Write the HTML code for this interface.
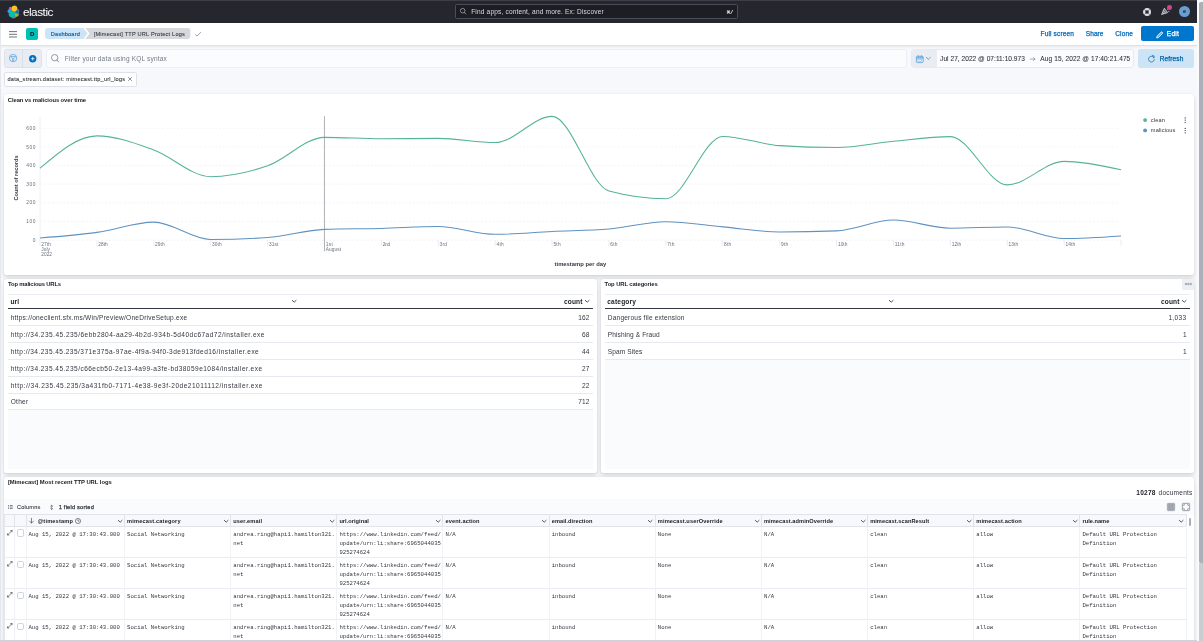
<!DOCTYPE html>
<html lang="en"><head><meta charset="utf-8"><title>[Mimecast] TTP URL Protect Logs - Elastic</title>
<style>
html,body{margin:0;padding:0;}
body{width:1203px;height:641px;overflow:hidden;position:relative;background:#f7f8fc;font-family:"Liberation Sans",sans-serif;color:#343741;}
.t{position:absolute;white-space:pre;line-height:10px;font-size:6.56px;color:#343741;}
.m{font-family:"Liberation Mono","DejaVu Sans Mono",monospace;}
#txt{position:absolute;left:0;top:0;width:1203px;height:641px;will-change:transform;}
.a{position:absolute;}
.panel{position:absolute;background:#fff;border-radius:2.8px;box-shadow:0 .4px 1.9px -.5px rgba(0,0,0,.07),0 1.2px 3.8px -.5px rgba(0,0,0,.055),0 2.7px 5.6px -.5px rgba(0,0,0,.05),0 7px 7px -.5px rgba(0,0,0,.04);}
svg{position:absolute;overflow:visible;}
.hl{position:absolute;height:1px;background:#e6e9f0;}
.vl{position:absolute;width:1px;background:#e3e7ee;}
</style></head><body>
<div class="a" style="left:0;top:0;width:1197.2px;height:22.5px;background:#25262e;"></div>
<div class="a" style="left:0;top:0;width:1197.2px;height:1px;background:#3d3f47;"></div>
<svg style="left:0;top:0" width="24" height="22" viewBox="0 0 24 22">
<path d="M14.400,5.600a3,3 0 0 1 3.000,3.400a2,2 0 0 1 0.800,3.800a1.600,1.600 0 0 1 -1.700,3.300a3.200,3.200 0 0 1 -5.800,1.000a3.100,3.100 0 0 1 -1.800,-3.800a2,2 0 0 1 0.300,-3.900a1.400,1.400 0 0 1 2.300,-1.900a3,3 0 0 1 2.900,-1.900z" fill="#fff" opacity="0.4"/>
<circle cx="14.400" cy="8.650" r="2.800" fill="#fec514"/>
<circle cx="10.350" cy="8.250" r="1.050" fill="#f04e98"/>
<ellipse cx="9.550" cy="11.050" rx="1.850" ry="1.700" fill="#1ba9f5"/>
<circle cx="12.050" cy="14.250" r="2.900" fill="#00bfb3"/>
<path d="M14.900,12.300 L17.100,9.800 A2.000,2.000 0 0 1 17.700,13.400 Z" fill="#0077cc"/>
<path d="M15.000,13.300 L17.400,13.900 A1.450,1.450 0 0 1 15.200,16.200 Z" fill="#93c90e"/>
</svg>
<div class="a" style="left:455.3px;top:4px;width:282.5px;height:14.6px;box-sizing:border-box;background:#1d1e24;border:0.8px solid #4b4e59;border-radius:1.5px;"></div>
<svg style="left:459.6px;top:8.1px" width="6.2" height="6.4" viewBox="0 0 6.2 6.4"><circle cx="2.7" cy="2.7" r="2.3" fill="none" stroke="#c5cad4" stroke-width="0.6"/><path d="M4.4,4.5 L5.9,6.1" stroke="#c5cad4" stroke-width="0.6" stroke-linecap="round"/></svg>
<svg style="left:1142.65px;top:7.55px" width="8" height="8" viewBox="0 0 8 8"><circle cx="4" cy="4" r="2.9" fill="none" stroke="#dcdee3" stroke-width="2.2"/><path d="M1.2,1.2L2.900,2.900M6.800,1.200L5.100,2.900M1.200,6.800L2.900,5.100M6.800,6.800L5.100,5.100" stroke="#25262e" stroke-width="0.55"/></svg>
<svg style="left:1160.8px;top:7.3px" width="9" height="8" viewBox="0 0 9 8"><path d="M0.600,7.500 L3.300,1.200 L6.600,5.600 Z" fill="rgba(255,255,255,0.35)" stroke="#e8eaee" stroke-width="0.7" stroke-linejoin="round"/><path d="M2.3,3.6L4.8,6.3M1.500,5.500L2.900,7.000M6.0,2.6L7.2,1.8M7.0,4.4L8.4,4.6" stroke="#e8eaee" stroke-width="0.6"/></svg>
<div class="a" style="left:1167.0px;top:5.4px;width:4.6px;height:4.6px;border-radius:50%;background:#d5428c;"></div>
<div class="a" style="left:1178.6px;top:5.8px;width:11.6px;height:11.6px;border-radius:50%;background:#6a9dd1;"></div>
<div class="a" style="left:0;top:22.5px;width:1197.2px;height:22.5px;background:#fff;border-bottom:0.7px solid #dde1e9;box-shadow:0 1px 2.5px rgba(0,0,0,.06);"></div>
<svg style="left:9.1px;top:30.8px" width="8" height="6.6" viewBox="0 0 8 6.6"><path d="M0,0.600H8M0,3.300H8M0,6.000H8" stroke="#343741" stroke-width="0.7"/></svg>
<div class="a" style="left:26.0px;top:28.2px;width:11.9px;height:11.9px;border-radius:2px;background:#00bfb3;"></div>
<svg style="left:45px;top:28.4px" width="146" height="10.9" viewBox="0 0 146 10.9"><path d="M2.8,0 H38.3 L42.6,5.450 L38.3,10.900 H2.8 A2.8,2.8 0 0 1 0,8.100 V2.800 A2.8,2.8 0 0 1 2.800,0Z" fill="#cce4f5"/><path d="M40.3,0 H142.6 A2.8,2.8 0 0 1 145.400,2.800 V8.100 A2.8,2.8 0 0 1 142.600,10.900 H40.300 L44.600,5.450Z" fill="#d6d8dc"/></svg>
<svg style="left:195.2px;top:31.8px" width="6" height="4.6" viewBox="0 0 6 4.6"><path d="M0.400,2.600 L2.000,4.100 L5.600,0.400" fill="none" stroke="#5d6471" stroke-width="0.6" stroke-linecap="round" stroke-linejoin="round"/></svg>
<div class="a" style="left:1141px;top:26.3px;width:52.6px;height:15.1px;border-radius:2px;background:#0077cc;"></div>
<svg style="left:1155.6px;top:30.6px" width="7.600" height="7.600" viewBox="0 0 7.6 7.6"><path d="M1.000,5.300 L5.000,1.300 A0.900,0.900 0 0 1 6.300,2.600 L2.300,6.600 L0.700,6.900 Z" fill="rgba(255,255,255,0.35)" stroke="#fff" stroke-width="0.9" stroke-linejoin="round"/></svg>
<div class="a" style="left:4px;top:49.2px;width:37.9px;height:18.6px;box-sizing:border-box;border-radius:2.8px;background:#e9edf3;border:0.6px solid #dde2ea;"></div>
<div class="a" style="left:22.2px;top:49.5px;width:0.6px;height:18px;background:#d9dee7;"></div>
<svg style="left:9.0px;top:54.3px" width="8.2" height="8.2" viewBox="0 0 8.2 8.2"><circle cx="4.1" cy="4.1" r="3.700" fill="none" stroke="#3f94d6" stroke-width="0.65"/><path d="M1.500,2.500 H6.700 L4.700,4.800 V6.700 H3.500 V4.800 Z" fill="#cfe3f4" stroke="#3f94d6" stroke-width="0.55" stroke-linejoin="round"/></svg>
<svg style="left:28.6px;top:54.7px" width="7.4" height="7.4" viewBox="0 0 7.4 7.4"><circle cx="3.7" cy="3.7" r="3.7" fill="#0071c2"/><path d="M3.700,1.900V5.500M1.900,3.700H5.500" stroke="#fff" stroke-width="0.75"/></svg>
<div class="a" style="left:46px;top:49.2px;width:861.3px;height:18.6px;box-sizing:border-box;border-radius:2.8px;background:#fbfcfd;border:0.7px solid #eceff4;"></div>
<svg style="left:50.8px;top:54.0px" width="8.2" height="8.6" viewBox="0 0 8.2 8.6"><circle cx="3.700" cy="3.700" r="3.200" fill="none" stroke="#5f6673" stroke-width="0.65"/><path d="M6.000,6.100 L7.800,8.100" stroke="#5f6673" stroke-width="0.65" stroke-linecap="round"/></svg>
<div class="a" style="left:911.2px;top:49.2px;width:223.1px;height:18.6px;box-sizing:border-box;border-radius:2.8px;background:#fbfcfd;border:0.7px solid #e6eaf0;overflow:hidden;"><div style="position:absolute;left:0;top:0;width:24.6px;height:18.6px;background:#e9edf3;"></div></div>
<svg style="left:915.5px;top:54.8px" width="7.6" height="8" viewBox="0 0 7.6 8"><rect x="0.400" y="1.300" width="6.800" height="6.300" rx="1.000" fill="#e3eef8" stroke="#2b88d0" stroke-width="0.6"/><path d="M0.500,2.900H7.100" stroke="#2b88d0" stroke-width="0.9"/><path d="M2.200,0.300V1.700M5.400,0.300V1.700" stroke="#2b88d0" stroke-width="0.7"/><rect x="1.900" y="4.400" width="3.800" height="1.900" fill="none" stroke="#5aa3dc" stroke-width="0.4"/></svg>
<svg style="left:926.10px;top:57.30px" width="4.6" height="3.3" viewBox="0 0 4.6 3.3"><path d="M0.3,0.4 L2.3,2.3 L4.3,0.4" fill="none" stroke="#1a7fcc" stroke-width="0.65" stroke-linecap="round" stroke-linejoin="round"/></svg>
<svg style="left:1029.8px;top:56.6px" width="5.4" height="4.2" viewBox="0 0 5.400 4.200"><path d="M0.200,2.100H5.000M3.300,0.400L5.000,2.100L3.300,3.800" fill="none" stroke="#69707d" stroke-width="0.55" stroke-linecap="round" stroke-linejoin="round"/></svg>
<div class="a" style="left:1138.2px;top:49.2px;width:55.6px;height:18.6px;border-radius:2.8px;background:#cce4f5;"></div>
<svg style="left:1148.4px;top:54.9px" width="7" height="7.4" viewBox="0 0 7 7.4"><path d="M5.900,2.600 A2.900,2.900 0 1 0 6.300,4.700" fill="none" stroke="#0061a6" stroke-width="0.7" stroke-linecap="round"/><path d="M4.300,0.300 L6.100,1.000 L5.900,2.900" fill="none" stroke="#0061a6" stroke-width="0.7" stroke-linecap="round" stroke-linejoin="round"/></svg>
<div class="a" style="left:3.9px;top:72px;width:132.7px;height:14.5px;box-sizing:border-box;border-radius:1.6px;background:#fff;border:0.7px solid #dce1ea;"></div>
<svg style="left:127.8px;top:77.3px" width="4" height="4" viewBox="0 0 4 4"><path d="M0.400,0.400L3.600,3.600M3.600,0.400L0.400,3.600" stroke="#343741" stroke-width="0.55" stroke-linecap="round"/></svg>
<div class="panel" style="left:3.8px;top:94px;width:1190px;height:181px;"></div>
<div class="panel" style="left:3.8px;top:278.7px;width:593px;height:194.3px;"></div>
<div class="panel" style="left:600.9px;top:278.7px;width:592.9px;height:194.3px;"></div>
<div class="panel" style="left:3.8px;top:476.7px;width:1190px;height:170px;"></div>
<svg style="left:0;top:0" width="1203" height="641" viewBox="0 0 1203 641"><path d="M40.5,221.37H1119.6" stroke="#e9ecf1" stroke-width="0.6" stroke-dasharray="1.9,1.9"/><path d="M40.5,202.74H1119.6" stroke="#e9ecf1" stroke-width="0.6" stroke-dasharray="1.9,1.9"/><path d="M40.5,184.11H1119.6" stroke="#e9ecf1" stroke-width="0.6" stroke-dasharray="1.9,1.9"/><path d="M40.5,165.48H1119.6" stroke="#e9ecf1" stroke-width="0.6" stroke-dasharray="1.9,1.9"/><path d="M40.5,146.85H1119.6" stroke="#e9ecf1" stroke-width="0.6" stroke-dasharray="1.9,1.9"/><path d="M40.5,128.22H1119.6" stroke="#e9ecf1" stroke-width="0.6" stroke-dasharray="1.9,1.9"/><path d="M40,116.3V240.2" stroke="#e9ecf2" stroke-width="0.8"/><path d="M40.5,240.2H1121.2" stroke="#eaedf1" stroke-width="0.7" stroke-dasharray="1.9,1.9"/><path d="M40.00,240.2V245.8M96.90,240.2V245.8M153.80,240.2V245.8M210.70,240.2V245.8M267.60,240.2V245.8M324.50,240.2V245.8M381.40,240.2V245.8M438.30,240.2V245.8M495.20,240.2V245.8M552.10,240.2V245.8M609.00,240.2V245.8M665.90,240.2V245.8M722.80,240.2V245.8M779.70,240.2V245.8M836.60,240.2V245.8M893.50,240.2V245.8M950.40,240.2V245.8M1007.30,240.2V245.8M1064.20,240.2V245.8M1121.10,240.2V245.8" stroke="#e3e7ee" stroke-width="0.8"/><path d="M324.45,116.2V251.3" stroke="#939599" stroke-width="0.75"/><path d="M40.00,168.27C58.97,152.07 77.93,135.86 96.90,135.86C115.87,135.86 134.83,143.22 153.80,150.02C172.77,156.82 191.73,176.66 210.70,176.66C229.67,176.66 248.63,172.40 267.60,165.85C286.57,159.30 305.53,137.35 324.50,137.35C343.47,137.35 362.43,138.84 381.40,138.84C400.37,138.84 419.33,138.37 438.30,138.37C457.27,138.37 476.23,142.57 495.20,142.57C514.17,142.57 533.13,116.39 552.10,116.39C571.07,116.39 590.03,185.85 609.00,191.00C627.97,196.16 646.93,198.73 665.90,198.73C684.87,198.73 703.83,136.42 722.80,136.42C741.77,136.42 760.73,144.40 779.70,145.64C798.67,146.88 817.63,147.50 836.60,147.50C855.57,147.50 874.53,143.08 893.50,141.26C912.47,139.44 931.43,136.60 950.40,136.60C969.37,136.60 988.33,184.86 1007.30,184.86C1026.27,184.86 1045.23,161.38 1064.20,161.38C1083.17,161.38 1102.13,165.57 1121.10,169.76" fill="none" stroke="#54b399" stroke-width="1.05" stroke-linejoin="round"/><path d="M40.00,237.95C58.97,236.48 77.93,235.00 96.90,232.36C115.87,229.72 134.83,222.12 153.80,222.12C172.77,222.12 191.73,239.44 210.70,239.44C229.67,239.44 248.63,238.82 267.60,237.58C286.57,236.34 305.53,230.00 324.50,229.38C343.47,228.76 362.43,228.92 381.40,228.45C400.37,227.98 419.33,226.59 438.30,226.59C457.27,226.59 476.23,234.32 495.20,234.32C514.17,234.32 533.13,232.32 552.10,231.43C571.07,230.55 590.03,230.62 609.00,229.01C627.97,227.39 646.93,221.74 665.90,221.74C684.87,221.74 703.83,225.16 722.80,226.87C741.77,228.57 760.73,231.99 779.70,231.99C798.67,231.99 817.63,231.62 836.60,230.87C855.57,230.13 874.53,220.07 893.50,220.07C912.47,220.07 931.43,228.17 950.40,228.17C969.37,228.17 988.33,226.96 1007.30,226.96C1026.27,226.96 1045.23,238.51 1064.20,238.51C1083.17,238.51 1102.13,237.21 1121.10,235.90" fill="none" stroke="#6092c0" stroke-width="1.05" stroke-linejoin="round"/><circle cx="1145.1" cy="120.1" r="1.95" fill="#54b399"/><circle cx="1145.1" cy="130.4" r="1.95" fill="#6092c0"/><path d="M1185.2,117.89999999999999v0.01M1185.2,120.1v0.01M1185.2,122.3v0.01" stroke="#343741" stroke-width="1.3" stroke-linecap="round"/><path d="M1185.2,128.4v0.01M1185.2,130.6v0.01M1185.2,132.79999999999998v0.01" stroke="#343741" stroke-width="1.3" stroke-linecap="round"/></svg>
<div class="a" style="left:-9.5px;top:173.4px;width:50px;height:10px;transform:rotate(-90deg);text-align:center;font-size:5.63px;line-height:10px;will-change:transform;"><span style="font-size:5.63px;font-weight:700;line-height:10px;white-space:pre;letter-spacing:-0.02px;">Count of records</span></div>
<div class="a" style="left:7.8px;top:294.4px;width:585.2px;height:174.6px;background:#fafbfd;"></div><div class="a" style="left:7.8px;top:294.9px;width:585.2px;height:114.88px;background:#fff;"></div><div class="hl" style="left:7.8px;top:294.2px;width:585.2px;background:#e9edf3;"></div><div class="a" style="left:7.8px;top:308.0px;width:585.2px;height:1px;background:#343741;"></div><div class="hl" style="left:7.8px;top:324.98px;width:585.2px;background:#e6e9f0;"></div><div class="hl" style="left:7.8px;top:341.86px;width:585.2px;background:#e6e9f0;"></div><div class="hl" style="left:7.8px;top:358.74px;width:585.2px;background:#e6e9f0;"></div><div class="hl" style="left:7.8px;top:375.62px;width:585.2px;background:#e6e9f0;"></div><div class="hl" style="left:7.8px;top:392.50px;width:585.2px;background:#e6e9f0;"></div><div class="hl" style="left:7.8px;top:409.38px;width:585.2px;background:#e6e9f0;"></div>
<div class="a" style="left:604.6px;top:294.4px;width:585.3000000000001px;height:174.6px;background:#fafbfd;"></div><div class="a" style="left:604.6px;top:294.9px;width:585.3000000000001px;height:64.24px;background:#fff;"></div><div class="hl" style="left:604.6px;top:294.2px;width:585.3000000000001px;background:#e9edf3;"></div><div class="a" style="left:604.6px;top:308.0px;width:585.3000000000001px;height:1px;background:#343741;"></div><div class="hl" style="left:604.6px;top:324.98px;width:585.3000000000001px;background:#e6e9f0;"></div><div class="hl" style="left:604.6px;top:341.86px;width:585.3000000000001px;background:#e6e9f0;"></div><div class="hl" style="left:604.6px;top:358.74px;width:585.3000000000001px;background:#e6e9f0;"></div>
<svg style="left:292.10px;top:300.20px" width="4.4" height="3.2" viewBox="0 0 4.4 3.2"><path d="M0.3,0.4 L2.2,2.2 L4.1000000000000005,0.4" fill="none" stroke="#2b2e38" stroke-width="0.85" stroke-linecap="round" stroke-linejoin="round"/></svg>
<svg style="left:585.10px;top:300.20px" width="4.4" height="3.2" viewBox="0 0 4.4 3.2"><path d="M0.3,0.4 L2.2,2.2 L4.1000000000000005,0.4" fill="none" stroke="#2b2e38" stroke-width="0.85" stroke-linecap="round" stroke-linejoin="round"/></svg>
<svg style="left:889.00px;top:300.20px" width="4.4" height="3.2" viewBox="0 0 4.4 3.2"><path d="M0.3,0.4 L2.2,2.2 L4.1000000000000005,0.4" fill="none" stroke="#2b2e38" stroke-width="0.85" stroke-linecap="round" stroke-linejoin="round"/></svg>
<svg style="left:1182.40px;top:300.20px" width="4.4" height="3.2" viewBox="0 0 4.4 3.2"><path d="M0.3,0.4 L2.2,2.2 L4.1000000000000005,0.4" fill="none" stroke="#2b2e38" stroke-width="0.85" stroke-linecap="round" stroke-linejoin="round"/></svg>
<div class="a" style="left:1182.2px;top:278.7px;width:11.6px;height:11px;background:#eceff3;border-radius:0 2.8px 0 1.4px;"></div>
<svg style="left:1184.6px;top:283.3px" width="7" height="2" viewBox="0 0 7 2"><circle cx="1" cy="1" r="0.75" fill="none" stroke="#4a4f5b" stroke-width="0.45"/><circle cx="3.400" cy="1" r="0.75" fill="none" stroke="#4a4f5b" stroke-width="0.45"/><circle cx="5.800" cy="1" r="0.75" fill="none" stroke="#4a4f5b" stroke-width="0.45"/></svg>
<div class="a" style="left:3.8px;top:499.4px;width:1190px;height:15px;background:#fafbfd;"></div>
<svg style="left:8.1px;top:504.9px" width="4.7" height="4" viewBox="0 0 4.7 4"><path d="M0,0.500H1.100M0,2.000H1.100M0,3.500H1.100M1.900,0.500H4.700M1.900,2.000H4.700M1.900,3.500H4.700" stroke="#4f5561" stroke-width="0.7"/></svg>
<svg style="left:49.9px;top:504.500px" width="3.3" height="4.700" viewBox="0 0 4 5.8"><path d="M2,0.400V5.400M0.700,1.600L2,0.400L3.300,1.600M0.700,4.200L2,5.400L3.300,4.200" fill="none" stroke="#343741" stroke-width="0.65" stroke-linecap="round" stroke-linejoin="round"/></svg>
<svg style="left:1167px;top:502.8px" width="8" height="8" viewBox="0 0 8 8"><rect x="0.300" y="0.300" width="7.400" height="7.400" rx="0.900" fill="#a7abb3" stroke="#8e939c" stroke-width="0.5"/><path d="M2.700,1.000V7.000M5.300,1.000V7.000" stroke="#8e939c" stroke-width="0.5"/></svg>
<svg style="left:1182px;top:502.8px" width="8" height="8" viewBox="0 0 8 8"><rect x="0.350" y="0.350" width="7.300" height="7.300" rx="0.900" fill="none" stroke="#5a606c" stroke-width="0.6"/><path d="M1.700,3.000V1.700H3.000M5.000,1.700H6.300V3.000M6.300,5.000V6.300H5.000M3.000,6.300H1.700V5.000" fill="none" stroke="#5a606c" stroke-width="0.55"/></svg>
<div class="a" style="left:3.8px;top:514.2px;width:1182.2px;height:12.1px;background:#f7f8fc;"></div>
<div class="hl" style="left:3.8px;top:513.8px;width:1182.2px;background:#dfe4ec;"></div>
<div class="hl" style="left:3.8px;top:525.9px;width:1182.2px;background:#dfe4ec;"></div>
<div class="hl" style="left:3.8px;top:557.05px;width:1182.2px;background:#e9ecf2;"></div>
<div class="hl" style="left:3.8px;top:588.20px;width:1182.2px;background:#e9ecf2;"></div>
<div class="hl" style="left:3.8px;top:619.35px;width:1182.2px;background:#e9ecf2;"></div>
<div class="vl" style="left:13.90px;top:514.2px;width:0.8px;height:12px;background:#dfe4ec;"></div>
<div class="vl" style="left:13.90px;top:526.5px;width:0.8px;height:120px;background:#f0f2f6;"></div>
<div class="vl" style="left:26.00px;top:514.2px;width:0.8px;height:12px;background:#dfe4ec;"></div>
<div class="vl" style="left:26.00px;top:526.5px;width:0.8px;height:120px;background:#f0f2f6;"></div>
<div class="vl" style="left:124.00px;top:514.2px;width:0.8px;height:12px;background:#dfe4ec;"></div>
<div class="vl" style="left:124.00px;top:526.5px;width:0.8px;height:120px;background:#f0f2f6;"></div>
<div class="vl" style="left:230.15px;top:514.2px;width:0.8px;height:12px;background:#dfe4ec;"></div>
<div class="vl" style="left:230.15px;top:526.5px;width:0.8px;height:120px;background:#f0f2f6;"></div>
<div class="vl" style="left:336.30px;top:514.2px;width:0.8px;height:12px;background:#dfe4ec;"></div>
<div class="vl" style="left:336.30px;top:526.5px;width:0.8px;height:120px;background:#f0f2f6;"></div>
<div class="vl" style="left:442.45px;top:514.2px;width:0.8px;height:12px;background:#dfe4ec;"></div>
<div class="vl" style="left:442.45px;top:526.5px;width:0.8px;height:120px;background:#f0f2f6;"></div>
<div class="vl" style="left:548.60px;top:514.2px;width:0.8px;height:12px;background:#dfe4ec;"></div>
<div class="vl" style="left:548.60px;top:526.5px;width:0.8px;height:120px;background:#f0f2f6;"></div>
<div class="vl" style="left:654.75px;top:514.2px;width:0.8px;height:12px;background:#dfe4ec;"></div>
<div class="vl" style="left:654.75px;top:526.5px;width:0.8px;height:120px;background:#f0f2f6;"></div>
<div class="vl" style="left:760.90px;top:514.2px;width:0.8px;height:12px;background:#dfe4ec;"></div>
<div class="vl" style="left:760.90px;top:526.5px;width:0.8px;height:120px;background:#f0f2f6;"></div>
<div class="vl" style="left:867.05px;top:514.2px;width:0.8px;height:12px;background:#dfe4ec;"></div>
<div class="vl" style="left:867.05px;top:526.5px;width:0.8px;height:120px;background:#f0f2f6;"></div>
<div class="vl" style="left:973.20px;top:514.2px;width:0.8px;height:12px;background:#dfe4ec;"></div>
<div class="vl" style="left:973.20px;top:526.5px;width:0.8px;height:120px;background:#f0f2f6;"></div>
<div class="vl" style="left:1079.35px;top:514.2px;width:0.8px;height:12px;background:#dfe4ec;"></div>
<div class="vl" style="left:1079.35px;top:526.5px;width:0.8px;height:120px;background:#f0f2f6;"></div>
<div class="vl" style="left:1185.50px;top:514.2px;width:0.8px;height:12px;background:#dfe4ec;"></div>
<div class="vl" style="left:1185.50px;top:526.5px;width:0.8px;height:120px;background:#f0f2f6;"></div>
<div class="vl" style="left:3.8px;top:514.2px;width:0.8px;height:130px;background:#e3e7ee;"></div>
<svg style="left:29.2px;top:517.5px" width="5" height="5.600" viewBox="0 0 5 5.6"><path d="M2.500,0.300V5.000M0.500,3.100L2.500,5.100L4.500,3.100" fill="none" stroke="#343741" stroke-width="0.6" stroke-linecap="round" stroke-linejoin="round"/></svg>
<svg style="left:75.1px;top:517.900px" width="6" height="6" viewBox="0 0 6 6"><circle cx="3" cy="3" r="2.550" fill="none" stroke="#343741" stroke-width="0.6"/><path d="M3,1.400V3.100H4.300" fill="none" stroke="#343741" stroke-width="0.6"/></svg>
<svg style="left:117.80px;top:519.60px" width="4.4" height="3.2" viewBox="0 0 4.4 3.2"><path d="M0.3,0.4 L2.2,2.2 L4.1000000000000005,0.4" fill="none" stroke="#2b2e38" stroke-width="0.8" stroke-linecap="round" stroke-linejoin="round"/></svg>
<svg style="left:223.75px;top:519.60px" width="4.4" height="3.2" viewBox="0 0 4.4 3.2"><path d="M0.3,0.4 L2.2,2.2 L4.1000000000000005,0.4" fill="none" stroke="#2b2e38" stroke-width="0.8" stroke-linecap="round" stroke-linejoin="round"/></svg>
<svg style="left:329.90px;top:519.60px" width="4.4" height="3.2" viewBox="0 0 4.4 3.2"><path d="M0.3,0.4 L2.2,2.2 L4.1000000000000005,0.4" fill="none" stroke="#2b2e38" stroke-width="0.8" stroke-linecap="round" stroke-linejoin="round"/></svg>
<svg style="left:436.05px;top:519.60px" width="4.4" height="3.2" viewBox="0 0 4.4 3.2"><path d="M0.3,0.4 L2.2,2.2 L4.1000000000000005,0.4" fill="none" stroke="#2b2e38" stroke-width="0.8" stroke-linecap="round" stroke-linejoin="round"/></svg>
<svg style="left:542.20px;top:519.60px" width="4.4" height="3.2" viewBox="0 0 4.4 3.2"><path d="M0.3,0.4 L2.2,2.2 L4.1000000000000005,0.4" fill="none" stroke="#2b2e38" stroke-width="0.8" stroke-linecap="round" stroke-linejoin="round"/></svg>
<svg style="left:648.35px;top:519.60px" width="4.4" height="3.2" viewBox="0 0 4.4 3.2"><path d="M0.3,0.4 L2.2,2.2 L4.1000000000000005,0.4" fill="none" stroke="#2b2e38" stroke-width="0.8" stroke-linecap="round" stroke-linejoin="round"/></svg>
<svg style="left:754.50px;top:519.60px" width="4.4" height="3.2" viewBox="0 0 4.4 3.2"><path d="M0.3,0.4 L2.2,2.2 L4.1000000000000005,0.4" fill="none" stroke="#2b2e38" stroke-width="0.8" stroke-linecap="round" stroke-linejoin="round"/></svg>
<svg style="left:860.65px;top:519.60px" width="4.4" height="3.2" viewBox="0 0 4.4 3.2"><path d="M0.3,0.4 L2.2,2.2 L4.1000000000000005,0.4" fill="none" stroke="#2b2e38" stroke-width="0.8" stroke-linecap="round" stroke-linejoin="round"/></svg>
<svg style="left:966.80px;top:519.60px" width="4.4" height="3.2" viewBox="0 0 4.4 3.2"><path d="M0.3,0.4 L2.2,2.2 L4.1000000000000005,0.4" fill="none" stroke="#2b2e38" stroke-width="0.8" stroke-linecap="round" stroke-linejoin="round"/></svg>
<svg style="left:1072.95px;top:519.60px" width="4.4" height="3.2" viewBox="0 0 4.4 3.2"><path d="M0.3,0.4 L2.2,2.2 L4.1000000000000005,0.4" fill="none" stroke="#2b2e38" stroke-width="0.8" stroke-linecap="round" stroke-linejoin="round"/></svg>
<svg style="left:1179.10px;top:519.60px" width="4.4" height="3.2" viewBox="0 0 4.4 3.2"><path d="M0.3,0.4 L2.2,2.2 L4.1000000000000005,0.4" fill="none" stroke="#2b2e38" stroke-width="0.8" stroke-linecap="round" stroke-linejoin="round"/></svg>
<svg style="left:6.6px;top:530.00px" width="5.6" height="5.6" viewBox="0 0 6 6"><path d="M0.700,5.300L5.300,0.700M4.000,0.600H5.400V2.000M0.600,4.000V5.400H2.000" fill="none" stroke="#3f444f" stroke-width="0.7" stroke-linecap="round" stroke-linejoin="round"/></svg>
<div class="a" style="left:17.1px;top:529.40px;width:7.4px;height:7.4px;box-sizing:border-box;border:0.6px solid #d0d4dc;border-radius:1.9px;background:#fff;"></div>
<svg style="left:6.6px;top:561.15px" width="5.6" height="5.6" viewBox="0 0 6 6"><path d="M0.700,5.300L5.300,0.700M4.000,0.600H5.400V2.000M0.600,4.000V5.400H2.000" fill="none" stroke="#3f444f" stroke-width="0.7" stroke-linecap="round" stroke-linejoin="round"/></svg>
<div class="a" style="left:17.1px;top:560.55px;width:7.4px;height:7.4px;box-sizing:border-box;border:0.6px solid #d0d4dc;border-radius:1.9px;background:#fff;"></div>
<svg style="left:6.6px;top:592.30px" width="5.6" height="5.6" viewBox="0 0 6 6"><path d="M0.700,5.300L5.300,0.700M4.000,0.600H5.400V2.000M0.600,4.000V5.400H2.000" fill="none" stroke="#3f444f" stroke-width="0.7" stroke-linecap="round" stroke-linejoin="round"/></svg>
<div class="a" style="left:17.1px;top:591.70px;width:7.4px;height:7.4px;box-sizing:border-box;border:0.6px solid #d0d4dc;border-radius:1.9px;background:#fff;"></div>
<svg style="left:6.6px;top:623.45px" width="5.6" height="5.6" viewBox="0 0 6 6"><path d="M0.700,5.300L5.300,0.700M4.000,0.600H5.400V2.000M0.600,4.000V5.400H2.000" fill="none" stroke="#3f444f" stroke-width="0.7" stroke-linecap="round" stroke-linejoin="round"/></svg>
<div class="a" style="left:17.1px;top:622.85px;width:7.4px;height:7.4px;box-sizing:border-box;border:0.6px solid #d0d4dc;border-radius:1.9px;background:#fff;"></div>
<div class="a" style="left:1188.9px;top:518.2px;width:2.3px;height:8.3px;border-radius:1px;background:#a9acb4;"></div>
<div class="a" style="left:1197.2px;top:0;width:5.8px;height:641px;background:#fafafa;"></div>
<div class="a" style="left:1199.4px;top:1.6px;width:3.6px;height:561px;border-radius:1.8px 0 0 1.8px;background:#adafb8;"></div>
<div class="a" style="left:1199.4px;top:562.6px;width:3.6px;height:80px;background:#caccd3;"></div>
<div class="a" style="left:0;top:22.5px;width:1.1px;height:620px;background:#e4e7ec;"></div>
<div class="a" style="left:0;top:640px;width:1197.2px;height:1px;background:#cfd1d6;"></div>
<div id="txt">
<span class="t" style="top:6.91px;font-size:11.8px;left:22.90px;color:#fff;letter-spacing:-0.485px;">elastic</span>
<span class="t" style="top:7.01px;font-size:6.56px;left:471.20px;color:#d6dbe5;letter-spacing:0.170px;">Find apps, content, and more. Ex: Discover</span>
<span class="t m" style="top:7.90px;font-size:5.6px;left:726.80px;font-weight:700;color:#fff;letter-spacing:-0.156px;">⌘/</span>
<span class="t" style="top:6.30px;font-size:5.6px;left:1182.90px;font-weight:700;color:#1a1c21;letter-spacing:-0.025px;">e</span>
<span class="t" style="top:29.21px;font-size:6.0px;left:29.90px;font-weight:700;color:#07101f;letter-spacing:-0.044px;">D</span>
<span class="t" style="top:28.91px;font-size:5.63px;left:50.80px;color:#0061a6;-webkit-text-stroke:0.15px currentColor;letter-spacing:0.196px;">Dashboard</span>
<span class="t" style="top:28.91px;font-size:5.63px;left:93.70px;-webkit-text-stroke:0.08px currentColor;letter-spacing:0.209px;">[Mimecast] TTP URL Protect Logs</span>
<span class="t" style="top:29.40px;font-size:6.56px;left:1040.50px;color:#006bb8;-webkit-text-stroke:0.25px currentColor;letter-spacing:0.140px;">Full screen</span>
<span class="t" style="top:29.40px;font-size:6.56px;left:1085.80px;color:#006bb8;-webkit-text-stroke:0.25px currentColor;letter-spacing:0.048px;">Share</span>
<span class="t" style="top:29.40px;font-size:6.56px;left:1115.20px;color:#006bb8;-webkit-text-stroke:0.25px currentColor;letter-spacing:0.153px;">Clone</span>
<span class="t" style="top:29.40px;font-size:6.56px;left:1166.80px;color:#fff;-webkit-text-stroke:0.25px currentColor;letter-spacing:0.263px;">Edit</span>
<span class="t" style="top:54.01px;font-size:6.56px;left:64.80px;color:#737a88;letter-spacing:0.173px;">Filter your data using KQL syntax</span>
<span class="t" style="top:53.90px;font-size:6.56px;left:940.10px;-webkit-text-stroke:0.08px currentColor;letter-spacing:0.041px;">Jul 27, 2022 @ 07:11:10.973</span>
<span class="t" style="top:53.90px;font-size:6.56px;left:1040.30px;-webkit-text-stroke:0.08px currentColor;letter-spacing:0.096px;">Aug 15, 2022 @ 17:40:21.475</span>
<span class="t" style="top:53.90px;font-size:6.56px;left:1159.70px;color:#0061a6;-webkit-text-stroke:0.25px currentColor;letter-spacing:0.117px;">Refresh</span>
<span class="t" style="top:73.91px;font-size:5.63px;left:7.50px;-webkit-text-stroke:0.1px currentColor;letter-spacing:0.207px;">data_stream.dataset: mimecast.ttp_url_logs</span>
<span class="t" style="top:94.61px;font-size:5.85px;left:7.75px;font-weight:700;color:#1a1c21;letter-spacing:-0.072px;">Clean vs malicious over time</span>
<span class="t" style="top:279.41px;font-size:5.85px;left:8.00px;font-weight:700;color:#1a1c21;letter-spacing:-0.157px;">Top malicious URLs</span>
<span class="t" style="top:279.41px;font-size:5.85px;left:604.60px;font-weight:700;color:#1a1c21;letter-spacing:-0.090px;">Top URL categories</span>
<span class="t" style="top:477.41px;font-size:5.85px;left:7.90px;font-weight:700;color:#1a1c21;letter-spacing:-0.022px;">[Mimecast] Most recent TTP URL logs</span>
<span class="t" style="top:235.70px;font-size:4.9px;left:32.70px;color:#69707d;letter-spacing:0.166px;">0</span>
<span class="t" style="top:217.08px;font-size:4.9px;left:26.30px;color:#69707d;letter-spacing:0.451px;">100</span>
<span class="t" style="top:198.45px;font-size:4.9px;left:26.30px;color:#69707d;letter-spacing:0.451px;">200</span>
<span class="t" style="top:179.81px;font-size:4.9px;left:26.30px;color:#69707d;letter-spacing:0.451px;">300</span>
<span class="t" style="top:161.19px;font-size:4.9px;left:26.30px;color:#69707d;letter-spacing:0.451px;">400</span>
<span class="t" style="top:142.56px;font-size:4.9px;left:26.30px;color:#69707d;letter-spacing:0.451px;">500</span>
<span class="t" style="top:123.92px;font-size:4.9px;left:26.30px;color:#69707d;letter-spacing:0.451px;">600</span>
<span class="t" style="top:239.90px;font-size:4.8px;left:41.30px;color:#69707d;letter-spacing:0.073px;">27th</span>
<span class="t" style="top:239.90px;font-size:4.8px;left:98.20px;color:#69707d;letter-spacing:0.073px;">28th</span>
<span class="t" style="top:239.90px;font-size:4.8px;left:155.10px;color:#69707d;letter-spacing:0.073px;">29th</span>
<span class="t" style="top:239.90px;font-size:4.8px;left:212.00px;color:#69707d;letter-spacing:0.073px;">30th</span>
<span class="t" style="top:239.90px;font-size:4.8px;left:268.90px;color:#69707d;letter-spacing:0.149px;">31st</span>
<span class="t" style="top:239.90px;font-size:4.8px;left:325.80px;color:#69707d;letter-spacing:0.358px;">1st</span>
<span class="t" style="top:239.90px;font-size:4.8px;left:382.70px;color:#69707d;letter-spacing:-0.286px;">2nd</span>
<span class="t" style="top:239.90px;font-size:4.8px;left:439.60px;color:#69707d;letter-spacing:0.145px;">3rd</span>
<span class="t" style="top:239.90px;font-size:4.8px;left:496.50px;color:#69707d;letter-spacing:0.251px;">4th</span>
<span class="t" style="top:239.90px;font-size:4.8px;left:553.40px;color:#69707d;letter-spacing:0.251px;">5th</span>
<span class="t" style="top:239.90px;font-size:4.8px;left:610.30px;color:#69707d;letter-spacing:0.251px;">6th</span>
<span class="t" style="top:239.90px;font-size:4.8px;left:667.20px;color:#69707d;letter-spacing:0.251px;">7th</span>
<span class="t" style="top:239.90px;font-size:4.8px;left:724.10px;color:#69707d;letter-spacing:0.251px;">8th</span>
<span class="t" style="top:239.90px;font-size:4.8px;left:781.00px;color:#69707d;letter-spacing:0.251px;">9th</span>
<span class="t" style="top:239.90px;font-size:4.8px;left:837.90px;color:#69707d;letter-spacing:0.073px;">10th</span>
<span class="t" style="top:239.90px;font-size:4.8px;left:894.80px;color:#69707d;letter-spacing:0.176px;">11th</span>
<span class="t" style="top:239.90px;font-size:4.8px;left:951.70px;color:#69707d;letter-spacing:0.073px;">12th</span>
<span class="t" style="top:239.90px;font-size:4.8px;left:1008.60px;color:#69707d;letter-spacing:0.073px;">13th</span>
<span class="t" style="top:239.90px;font-size:4.8px;left:1065.50px;color:#69707d;letter-spacing:0.073px;">14th</span>
<span class="t" style="top:244.81px;font-size:4.8px;left:41.30px;color:#69707d;letter-spacing:0.048px;">July</span>
<span class="t" style="top:249.71px;font-size:4.8px;left:41.30px;color:#69707d;letter-spacing:0.008px;">2022</span>
<span class="t" style="top:244.81px;font-size:4.8px;left:325.80px;color:#69707d;letter-spacing:0.048px;">August</span>
<span class="t" style="top:258.61px;font-size:5.85px;left:554.60px;font-weight:700;letter-spacing:-0.002px;">timestamp per day</span>
<span class="t" style="top:114.91px;font-size:5.63px;left:1150.80px;letter-spacing:0.188px;">clean</span>
<span class="t" style="top:125.20px;font-size:5.63px;left:1150.80px;letter-spacing:0.147px;">malicious</span>
<span class="t" style="top:296.60px;font-size:6.56px;left:10.50px;font-weight:700;color:#1a1c21;letter-spacing:0.050px;">url</span>
<span class="t" style="top:296.60px;font-size:6.56px;left:564.00px;font-weight:700;color:#1a1c21;letter-spacing:0.149px;">count</span>
<span class="t" style="top:313.01px;font-size:6.56px;left:10.70px;letter-spacing:0.238px;">https://oneclient.sfx.ms/Win/Preview/OneDriveSetup.exe</span>
<span class="t" style="top:313.01px;font-size:6.56px;left:578.15px;letter-spacing:0.125px;">162</span>
<span class="t" style="top:329.88px;font-size:6.56px;left:10.70px;letter-spacing:0.463px;">http://34.235.45.235/6ebb2804-aa29-4b2d-934b-5d40dc67ad72/installer.exe</span>
<span class="t" style="top:329.88px;font-size:6.56px;left:582.00px;letter-spacing:0.069px;">68</span>
<span class="t" style="top:346.76px;font-size:6.56px;left:10.70px;letter-spacing:0.455px;">http://34.235.45.235/371e375a-97ae-4f9a-94f0-3de913fded16/installer.exe</span>
<span class="t" style="top:346.76px;font-size:6.56px;left:582.00px;letter-spacing:0.069px;">44</span>
<span class="t" style="top:363.65px;font-size:6.56px;left:10.70px;letter-spacing:0.460px;">http://34.235.45.235/c66ecb50-2e13-4a99-a3fe-bd38059e1084/installer.exe</span>
<span class="t" style="top:363.65px;font-size:6.56px;left:582.00px;letter-spacing:0.069px;">27</span>
<span class="t" style="top:380.52px;font-size:6.56px;left:10.70px;letter-spacing:0.502px;">http://34.235.45.235/3a431fb0-7171-4e38-9e3f-20de21011112/installer.exe</span>
<span class="t" style="top:380.52px;font-size:6.56px;left:582.00px;letter-spacing:0.069px;">22</span>
<span class="t" style="top:397.40px;font-size:6.56px;left:10.70px;letter-spacing:0.272px;">Other</span>
<span class="t" style="top:397.40px;font-size:6.56px;left:578.15px;letter-spacing:0.125px;">712</span>
<span class="t" style="top:296.60px;font-size:6.56px;left:607.30px;font-weight:700;color:#1a1c21;letter-spacing:0.187px;">category</span>
<span class="t" style="top:296.60px;font-size:6.56px;left:1161.00px;font-weight:700;color:#1a1c21;letter-spacing:0.127px;">count</span>
<span class="t" style="top:313.01px;font-size:6.56px;left:607.80px;letter-spacing:0.197px;">Dangerous file extension</span>
<span class="t" style="top:313.01px;font-size:6.56px;left:1168.40px;letter-spacing:0.335px;">1,033</span>
<span class="t" style="top:329.88px;font-size:6.56px;left:607.80px;letter-spacing:0.114px;">Phishing &amp; Fraud</span>
<span class="t" style="top:329.88px;font-size:6.56px;left:1183.00px;">1</span>
<span class="t" style="top:346.76px;font-size:6.56px;left:607.80px;letter-spacing:0.117px;">Spam Sites</span>
<span class="t" style="top:346.76px;font-size:6.56px;left:1183.00px;">1</span>
<span class="t" style="top:487.90px;font-size:6.56px;left:1136.30px;font-weight:700;color:#1a1c21;letter-spacing:0.240px;">10278</span>
<span class="t" style="top:487.90px;font-size:6.56px;left:1158.60px;letter-spacing:0.208px;">documents</span>
<span class="t" style="top:501.81px;font-size:5.63px;left:17.00px;-webkit-text-stroke:0.1px currentColor;letter-spacing:0.200px;">Columns</span>
<span class="t" style="top:501.81px;font-size:5.63px;left:58.70px;-webkit-text-stroke:0.25px currentColor;letter-spacing:0.228px;">1 field sorted</span>
<span class="t" style="top:515.81px;font-size:5.63px;left:37.70px;font-weight:700;color:#1a1c21;letter-spacing:0.176px;">@timestamp</span>
<span class="t" style="top:515.81px;font-size:5.63px;left:127.10px;font-weight:700;color:#1a1c21;letter-spacing:0.159px;">mimecast.category</span>
<span class="t" style="top:515.81px;font-size:5.63px;left:233.25px;font-weight:700;color:#1a1c21;letter-spacing:0.139px;">user.email</span>
<span class="t" style="top:515.81px;font-size:5.63px;left:339.40px;font-weight:700;color:#1a1c21;letter-spacing:0.037px;">url.original</span>
<span class="t" style="top:515.81px;font-size:5.63px;left:445.55px;font-weight:700;color:#1a1c21;letter-spacing:0.106px;">event.action</span>
<span class="t" style="top:515.81px;font-size:5.63px;left:551.70px;font-weight:700;color:#1a1c21;letter-spacing:0.069px;">email.direction</span>
<span class="t" style="top:515.81px;font-size:5.63px;left:657.85px;font-weight:700;color:#1a1c21;letter-spacing:0.112px;">mimecast.userOverride</span>
<span class="t" style="top:515.81px;font-size:5.63px;left:764.00px;font-weight:700;color:#1a1c21;letter-spacing:0.087px;">mimecast.adminOverride</span>
<span class="t" style="top:515.81px;font-size:5.63px;left:870.15px;font-weight:700;color:#1a1c21;letter-spacing:0.077px;">mimecast.scanResult</span>
<span class="t" style="top:515.81px;font-size:5.63px;left:976.30px;font-weight:700;color:#1a1c21;letter-spacing:0.097px;">mimecast.action</span>
<span class="t" style="top:515.81px;font-size:5.63px;left:1082.45px;font-weight:700;color:#1a1c21;letter-spacing:0.032px;">rule.name</span>
<span class="t m" style="top:529.71px;font-size:5.63px;left:28.40px;letter-spacing:0.010px;">Aug 15, 2022 @ 17:30:43.000</span>
<span class="t m" style="top:529.71px;font-size:5.63px;left:127.10px;letter-spacing:0.009px;">Social Networking</span>
<span class="t m" style="top:529.71px;font-size:5.63px;left:233.25px;letter-spacing:0.009px;">andrea.ring@hapi1.hamilton321.</span>
<span class="t m" style="top:538.66px;font-size:5.63px;left:233.25px;letter-spacing:0.006px;">net</span>
<span class="t m" style="top:529.71px;font-size:5.63px;left:339.40px;letter-spacing:0.009px;">https://www.linkedin.com/feed/</span>
<span class="t m" style="top:538.66px;font-size:5.63px;left:339.40px;letter-spacing:0.009px;">update/urn:li:share:6965044035</span>
<span class="t m" style="top:547.63px;font-size:5.63px;left:339.40px;letter-spacing:0.009px;">925274624</span>
<span class="t m" style="top:529.71px;font-size:5.63px;left:445.55px;letter-spacing:0.006px;">N/A</span>
<span class="t m" style="top:529.71px;font-size:5.63px;left:551.70px;letter-spacing:0.008px;">inbound</span>
<span class="t m" style="top:529.71px;font-size:5.63px;left:657.85px;letter-spacing:0.007px;">None</span>
<span class="t m" style="top:529.71px;font-size:5.63px;left:764.00px;letter-spacing:0.006px;">N/A</span>
<span class="t m" style="top:529.71px;font-size:5.63px;left:870.15px;letter-spacing:0.008px;">clean</span>
<span class="t m" style="top:529.71px;font-size:5.63px;left:976.30px;letter-spacing:0.008px;">allow</span>
<span class="t m" style="top:529.71px;font-size:5.63px;left:1082.45px;letter-spacing:0.010px;">Default URL Protection</span>
<span class="t m" style="top:538.66px;font-size:5.63px;left:1082.45px;letter-spacing:0.009px;">Definition</span>
<span class="t m" style="top:560.85px;font-size:5.63px;left:28.40px;letter-spacing:0.010px;">Aug 15, 2022 @ 17:30:43.000</span>
<span class="t m" style="top:560.85px;font-size:5.63px;left:127.10px;letter-spacing:0.009px;">Social Networking</span>
<span class="t m" style="top:560.85px;font-size:5.63px;left:233.25px;letter-spacing:0.009px;">andrea.ring@hapi1.hamilton321.</span>
<span class="t m" style="top:569.82px;font-size:5.63px;left:233.25px;letter-spacing:0.006px;">net</span>
<span class="t m" style="top:560.85px;font-size:5.63px;left:339.40px;letter-spacing:0.009px;">https://www.linkedin.com/feed/</span>
<span class="t m" style="top:569.82px;font-size:5.63px;left:339.40px;letter-spacing:0.009px;">update/urn:li:share:6965044035</span>
<span class="t m" style="top:578.77px;font-size:5.63px;left:339.40px;letter-spacing:0.009px;">925274624</span>
<span class="t m" style="top:560.85px;font-size:5.63px;left:445.55px;letter-spacing:0.006px;">N/A</span>
<span class="t m" style="top:560.85px;font-size:5.63px;left:551.70px;letter-spacing:0.008px;">inbound</span>
<span class="t m" style="top:560.85px;font-size:5.63px;left:657.85px;letter-spacing:0.007px;">None</span>
<span class="t m" style="top:560.85px;font-size:5.63px;left:764.00px;letter-spacing:0.006px;">N/A</span>
<span class="t m" style="top:560.85px;font-size:5.63px;left:870.15px;letter-spacing:0.008px;">clean</span>
<span class="t m" style="top:560.85px;font-size:5.63px;left:976.30px;letter-spacing:0.008px;">allow</span>
<span class="t m" style="top:560.85px;font-size:5.63px;left:1082.45px;letter-spacing:0.010px;">Default URL Protection</span>
<span class="t m" style="top:569.82px;font-size:5.63px;left:1082.45px;letter-spacing:0.009px;">Definition</span>
<span class="t m" style="top:592.00px;font-size:5.63px;left:28.40px;letter-spacing:0.010px;">Aug 15, 2022 @ 17:30:43.000</span>
<span class="t m" style="top:592.00px;font-size:5.63px;left:127.10px;letter-spacing:0.009px;">Social Networking</span>
<span class="t m" style="top:592.00px;font-size:5.63px;left:233.25px;letter-spacing:0.009px;">andrea.ring@hapi1.hamilton321.</span>
<span class="t m" style="top:600.97px;font-size:5.63px;left:233.25px;letter-spacing:0.006px;">net</span>
<span class="t m" style="top:592.00px;font-size:5.63px;left:339.40px;letter-spacing:0.009px;">https://www.linkedin.com/feed/</span>
<span class="t m" style="top:600.97px;font-size:5.63px;left:339.40px;letter-spacing:0.009px;">update/urn:li:share:6965044035</span>
<span class="t m" style="top:609.93px;font-size:5.63px;left:339.40px;letter-spacing:0.009px;">925274624</span>
<span class="t m" style="top:592.00px;font-size:5.63px;left:445.55px;letter-spacing:0.006px;">N/A</span>
<span class="t m" style="top:592.00px;font-size:5.63px;left:551.70px;letter-spacing:0.008px;">inbound</span>
<span class="t m" style="top:592.00px;font-size:5.63px;left:657.85px;letter-spacing:0.007px;">None</span>
<span class="t m" style="top:592.00px;font-size:5.63px;left:764.00px;letter-spacing:0.006px;">N/A</span>
<span class="t m" style="top:592.00px;font-size:5.63px;left:870.15px;letter-spacing:0.008px;">clean</span>
<span class="t m" style="top:592.00px;font-size:5.63px;left:976.30px;letter-spacing:0.008px;">allow</span>
<span class="t m" style="top:592.00px;font-size:5.63px;left:1082.45px;letter-spacing:0.010px;">Default URL Protection</span>
<span class="t m" style="top:600.97px;font-size:5.63px;left:1082.45px;letter-spacing:0.009px;">Definition</span>
<span class="t m" style="top:623.16px;font-size:5.63px;left:28.40px;letter-spacing:0.010px;">Aug 15, 2022 @ 17:30:43.000</span>
<span class="t m" style="top:623.16px;font-size:5.63px;left:127.10px;letter-spacing:0.009px;">Social Networking</span>
<span class="t m" style="top:623.16px;font-size:5.63px;left:233.25px;letter-spacing:0.009px;">andrea.ring@hapi1.hamilton321.</span>
<span class="t m" style="top:632.11px;font-size:5.63px;left:233.25px;letter-spacing:0.006px;">net</span>
<span class="t m" style="top:623.16px;font-size:5.63px;left:339.40px;letter-spacing:0.009px;">https://www.linkedin.com/feed/</span>
<span class="t m" style="top:632.11px;font-size:5.63px;left:339.40px;letter-spacing:0.009px;">update/urn:li:share:6965044035</span>
<span class="t m" style="top:623.16px;font-size:5.63px;left:445.55px;letter-spacing:0.006px;">N/A</span>
<span class="t m" style="top:623.16px;font-size:5.63px;left:551.70px;letter-spacing:0.008px;">inbound</span>
<span class="t m" style="top:623.16px;font-size:5.63px;left:657.85px;letter-spacing:0.007px;">None</span>
<span class="t m" style="top:623.16px;font-size:5.63px;left:764.00px;letter-spacing:0.006px;">N/A</span>
<span class="t m" style="top:623.16px;font-size:5.63px;left:870.15px;letter-spacing:0.008px;">clean</span>
<span class="t m" style="top:623.16px;font-size:5.63px;left:976.30px;letter-spacing:0.008px;">allow</span>
<span class="t m" style="top:623.16px;font-size:5.63px;left:1082.45px;letter-spacing:0.010px;">Default URL Protection</span>
<span class="t m" style="top:632.11px;font-size:5.63px;left:1082.45px;letter-spacing:0.009px;">Definition</span>
</div>
</body></html>
